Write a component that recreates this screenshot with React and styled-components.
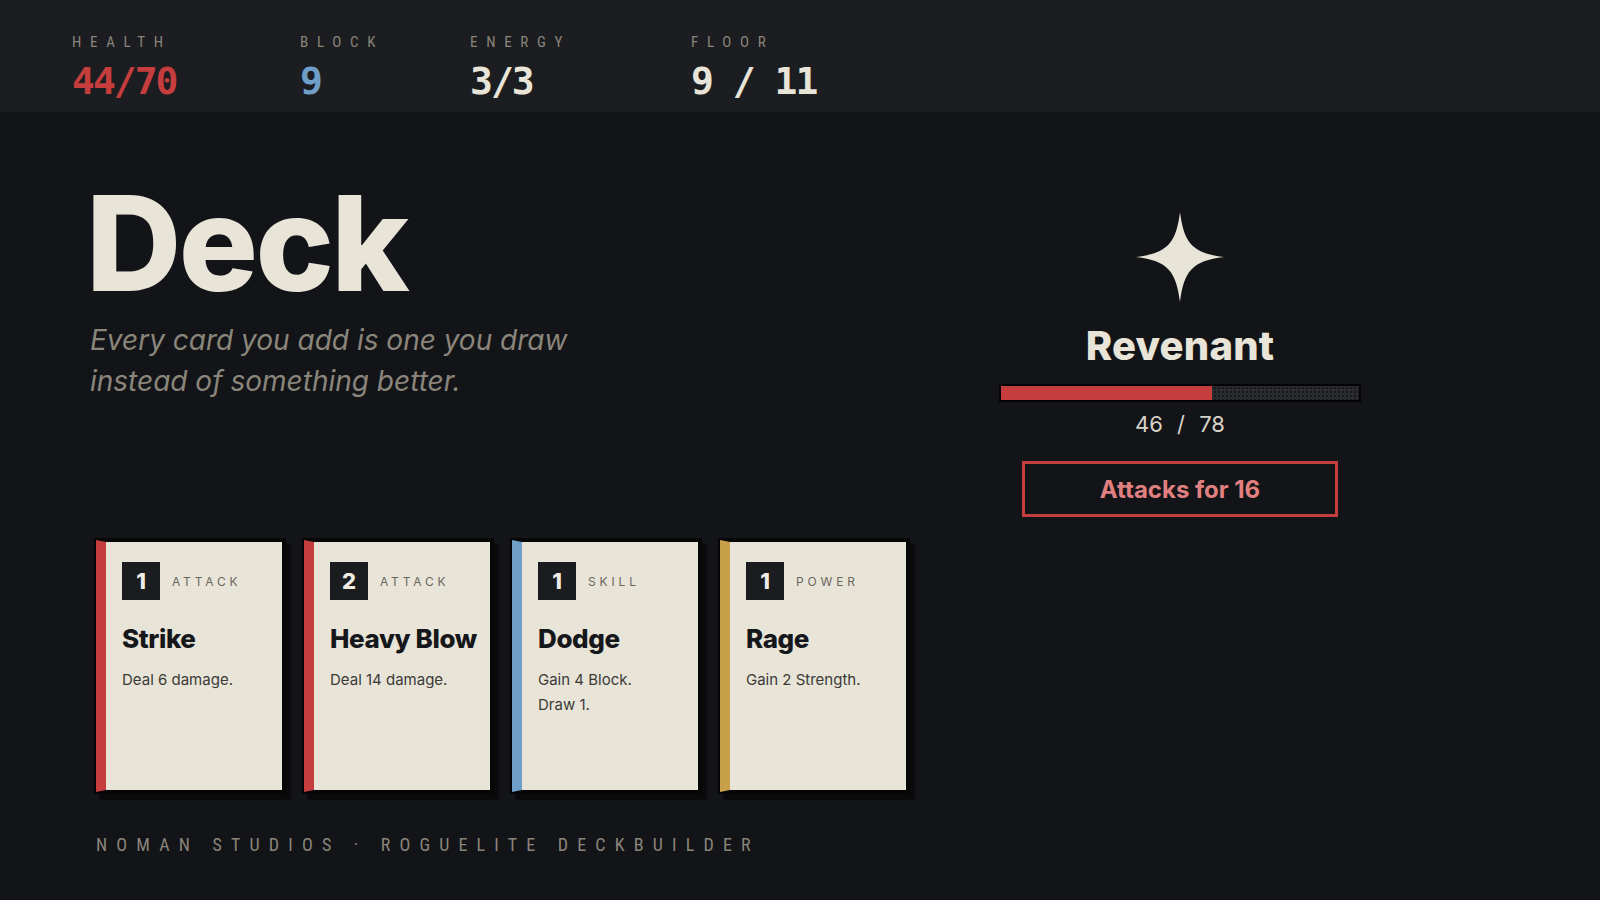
import styled, { createGlobalStyle } from "styled-components";

const GlobalStyle = createGlobalStyle`
  html, body {
    margin: 0;
    padding: 0;
    background: #131418;
  }
  body {
    font-family: Inter, "Noto Sans", sans-serif;
    color: #e8e4d8;
  }
`;

const narrow = `"Liberation Sans Narrow", "Roboto Condensed", "Arial Narrow", "Liberation Sans", sans-serif`;

const Page = styled.div`
  width: 1600px;
  height: 900px;
  display: flex;
  flex-direction: column;
  overflow: hidden;
`;

const TopBar = styled.header`
  height: 112px;
  box-sizing: border-box;
  padding: 35px 0 0 72px;
  background: #1c1d21;
  display: flex;
  align-items: flex-start;
`;

const Stat = styled.div`
  width: ${(p) => (p.$w ? `${p.$w}px` : "auto")};
  display: flex;
  flex-direction: column;
  gap: 13px;
`;

const StatLabel = styled.span`
  font-family: ${narrow};
  font-size: 15px;
  line-height: 14px;
  letter-spacing: 0.58em;
  color: #8a857b;
`;

const StatValue = styled.span`
  font-family: "DejaVu Sans Mono", "Liberation Mono", monospace;
  font-weight: 700;
  font-size: 38px;
  line-height: 38px;
  letter-spacing: -2px;
  color: ${(p) => p.$color || "#e8e4d8"};
  white-space: pre;
`;

const Main = styled.main`
  flex: 1;
  display: grid;
  grid-template-columns: 1fr 362px;
  padding: 0 239px 0 88px;
`;

const LeftCol = styled.section`
  display: flex;
  flex-direction: column;
  padding-top: 65px;
`;

const Title = styled.h1`
  margin: 0 0 0 -2px;
  font-size: 132px;
  line-height: 132px;
  font-weight: 800;
  letter-spacing: -0.02em;
  color: #e8e4d8;
`;

const Subtitle = styled.p`
  margin: 11px 0 0 2px;
  font-size: 28px;
  line-height: 41px;
  font-style: italic;
  color: #8b867b;
`;

const CardRow = styled.div`
  margin: 138px 0 0 8px;
  display: flex;
  gap: 20px;
`;

const Card = styled.article`
  width: 188px;
  height: 252px;
  box-sizing: border-box;
  background: #e8e4d8;
  border: 2px solid #060607;
  border-left: 10px solid ${(p) => p.$accent};
  box-shadow: 0 0 0 2px #060607, 5px 6px 0 2px #0a0a0c;
  padding: 20px 6px 0 16px;
  display: flex;
  flex-direction: column;
`;

const CardTop = styled.div`
  display: flex;
  align-items: center;
  gap: 12px;
`;

const Cost = styled.span`
  width: 38px;
  height: 38px;
  background: #1b1c20;
  color: #f0ece2;
  display: flex;
  align-items: center;
  justify-content: center;
  font-size: 22px;
  font-weight: 800;
`;

const CardType = styled.span`
  font-size: 12px;
  letter-spacing: 0.32em;
  color: #6b665d;
`;

const CardName = styled.h3`
  margin: 24px 0 0;
  font-size: 26px;
  line-height: 30px;
  font-weight: 800;
  letter-spacing: -0.015em;
  color: #16171b;
  white-space: nowrap;
`;

const CardDesc = styled.p`
  margin: 13px 0 0;
  font-size: 15px;
  line-height: 25px;
  color: #3b3a37;
  white-space: pre-line;
`;

const Footer = styled.footer`
  margin: 42px 0 0 8px;
  font-family: ${narrow};
  font-size: 18px;
  letter-spacing: 0.51em;
  color: #8a857b;
  white-space: nowrap;
`;

const RightCol = styled.aside`
  padding-top: 100px;
  display: flex;
  flex-direction: column;
  align-items: center;
`;

const EnemyName = styled.h2`
  margin: 20px 0 0;
  font-size: 40px;
  line-height: 48px;
  font-weight: 800;
  letter-spacing: 0.005em;
  color: #e8e4d8;
`;

const HpBar = styled.div`
  margin-top: 14px;
  width: 362px;
  height: 18px;
  box-sizing: border-box;
  border: 2px solid #030304;
  background-color: #2a2b2e;
  background-image: radial-gradient(#17181a 0.8px, transparent 1px);
  background-size: 4px 4px;
`;

const HpFill = styled.div`
  height: 100%;
  background: #c53d3d;
`;

const HpText = styled.div`
  margin-top: 9px;
  font-size: 22px;
  line-height: 26px;
  color: #d8d3c8;
  word-spacing: 8px;
`;

const Intent = styled.div`
  margin-top: 24px;
  width: 316px;
  height: 56px;
  box-sizing: border-box;
  border: 3px solid #c53d3d;
  display: flex;
  align-items: center;
  justify-content: center;
  font-size: 24px;
  font-weight: 700;
  color: #e08080;
`;

const Star = () => (
  <svg width="88" height="90" viewBox="-44 -45 88 90">
    <path
      d="M0 -45 C4 -14 12 -4 44 0 C12 4 4 14 0 45 C-4 14 -12 4 -44 0 C-12 -4 -4 -14 0 -45 Z"
      fill="#e8e4d8"
    />
  </svg>
);

const RED = "#c53d3d";
const BLUE = "#6f9fc8";
const GOLD = "#c9a04a";

const stats = [
  { label: "HEALTH", value: "44/70", color: RED, w: 228 },
  { label: "BLOCK", value: "9", color: BLUE, w: 170 },
  { label: "ENERGY", value: "3/3", w: 221 },
  { label: "FLOOR", value: "9 / 11" },
];

const cards = [
  { cost: 1, type: "ATTACK", name: "Strike", desc: "Deal 6 damage.", accent: RED },
  { cost: 2, type: "ATTACK", name: "Heavy Blow", desc: "Deal 14 damage.", accent: RED },
  { cost: 1, type: "SKILL", name: "Dodge", desc: "Gain 4 Block.\nDraw 1.", accent: BLUE },
  { cost: 1, type: "POWER", name: "Rage", desc: "Gain 2 Strength.", accent: GOLD },
];

export default function App() {
  const hp = 46;
  const maxHp = 78;

  return (
    <Page>
      <GlobalStyle />
      <TopBar>
        {stats.map((s) => (
          <Stat key={s.label} $w={s.w}>
            <StatLabel>{s.label}</StatLabel>
            <StatValue $color={s.color}>{s.value}</StatValue>
          </Stat>
        ))}
      </TopBar>

      <Main>
        <LeftCol>
          <Title>Deck</Title>
          <Subtitle>
            Every card you add is one you draw
            <br />
            instead of something better.
          </Subtitle>
          <CardRow>
            {cards.map((c) => (
              <Card key={c.name} $accent={c.accent}>
                <CardTop>
                  <Cost>{c.cost}</Cost>
                  <CardType>{c.type}</CardType>
                </CardTop>
                <CardName>{c.name}</CardName>
                <CardDesc>{c.desc}</CardDesc>
              </Card>
            ))}
          </CardRow>
          <Footer>NOMAN STUDIOS · ROGUELITE DECKBUILDER</Footer>
        </LeftCol>

        <RightCol>
          <Star />
          <EnemyName>Revenant</EnemyName>
          <HpBar>
            <HpFill style={{ width: `${(hp / maxHp) * 100}%` }} />
          </HpBar>
          <HpText>
            {hp} / {maxHp}
          </HpText>
          <Intent>Attacks for 16</Intent>
        </RightCol>
      </Main>
    </Page>
  );
}
